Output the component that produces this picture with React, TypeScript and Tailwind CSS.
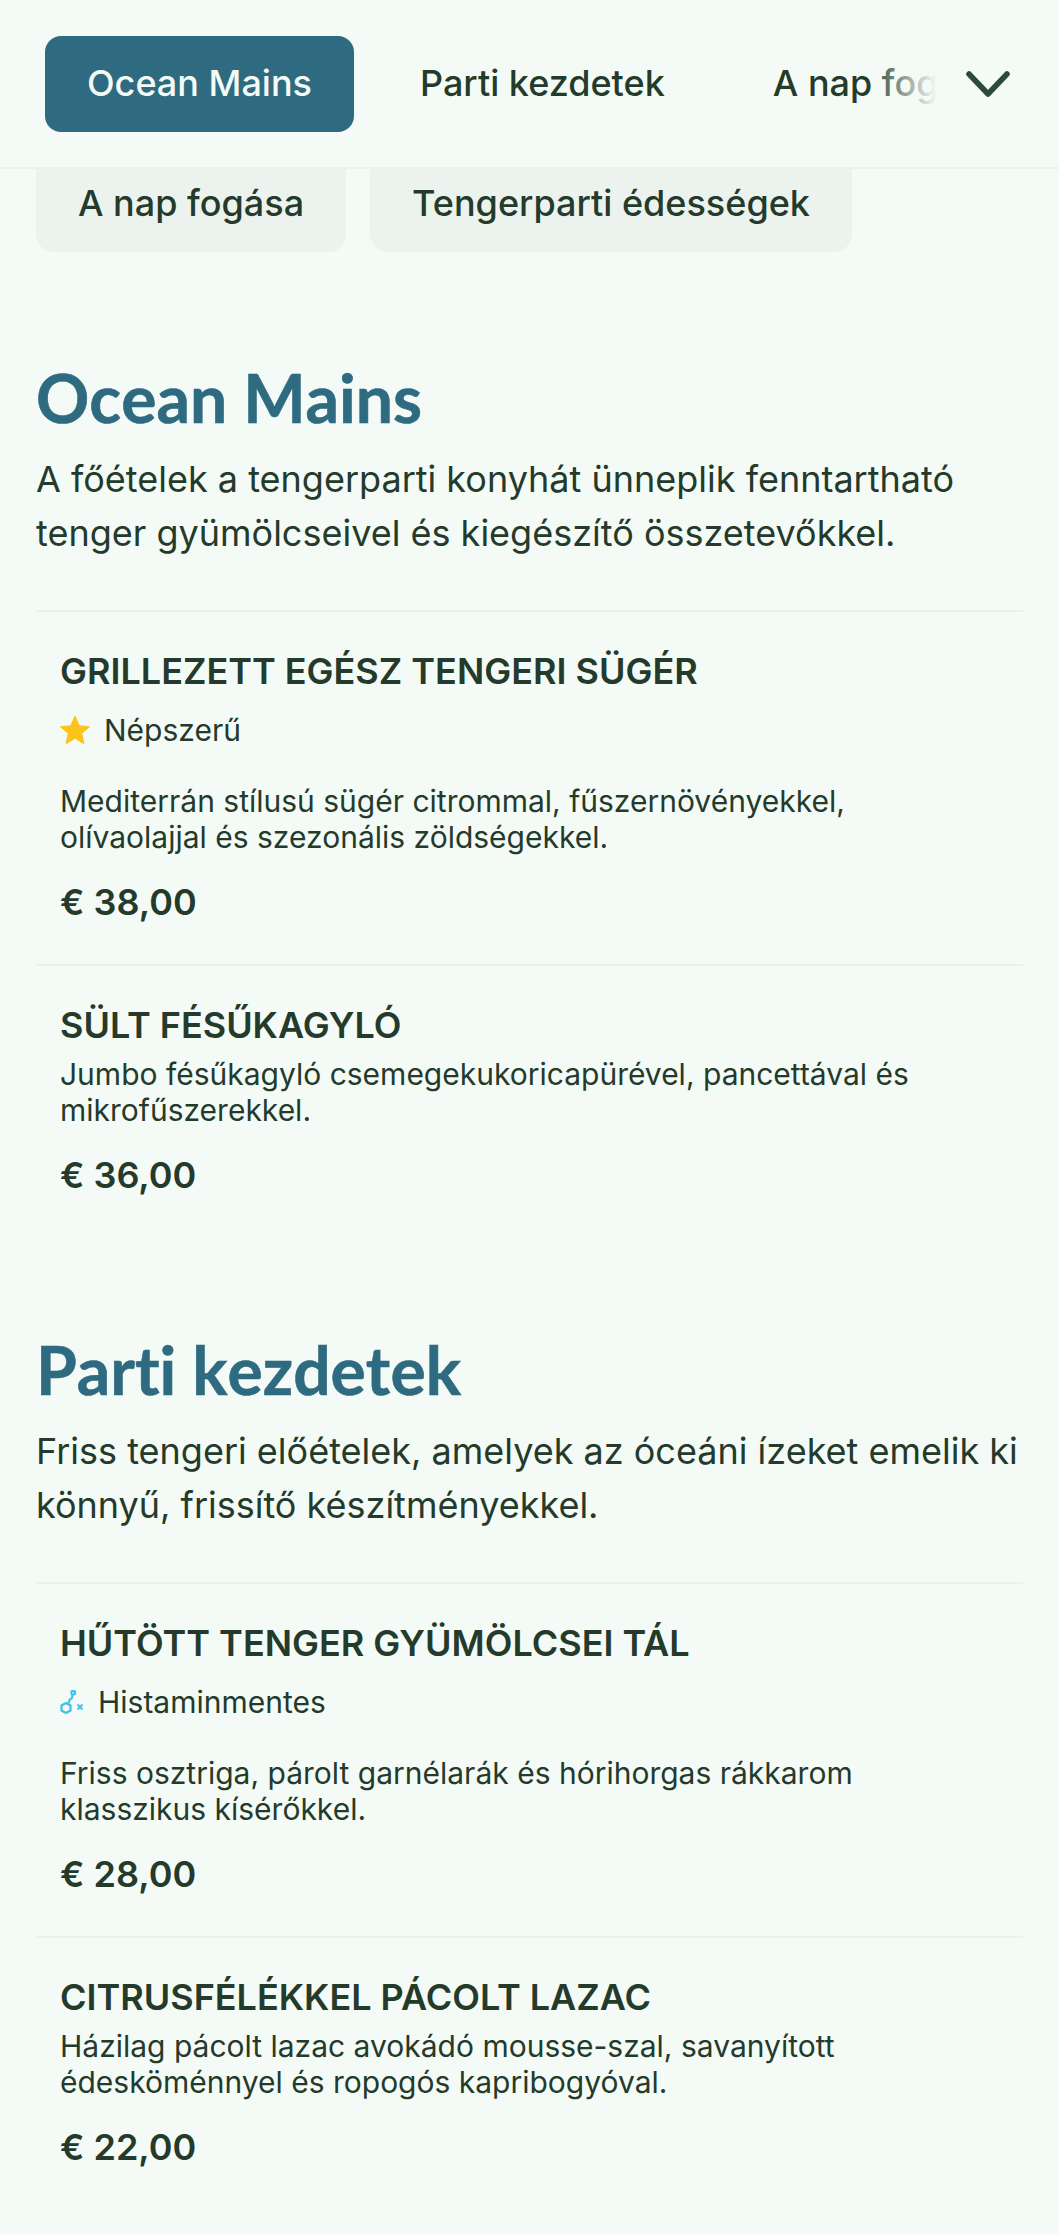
import React from "react";

const inter = "font-['Inter',sans-serif]";

function Star() {
  return (
    <svg viewBox="0 0 30 31" className="w-[30px] h-[31px] shrink-0" aria-hidden="true">
      <path fill="#fcc419" stroke="#fcc419" strokeWidth="1" strokeLinejoin="round" d="M15 1l4.200 9.800 10.300.9-7.800 6.800 2.300 10.200L15 23.300l-9 5.400 2.300-10.200L.5 11.700l10.300-.9z" />
    </svg>
  );
}

function Molecule() {
  return (
    <svg viewBox="0 0 24 24" className="w-[24px] h-[24px] shrink-0" fill="none" stroke="#3fc1ea" strokeWidth="2.200" aria-hidden="true">
      <path d="M6 13l4.500 2.500v5L6 23l-4.500-2.500v-5z" />
      <path d="M8.500 13.500l1-3.500 2.500-2 .5-3" />
      <rect x="11.500" y="1" width="3.500" height="3.500" rx="1" />
      <path strokeWidth="1.800" d="M17.500 14.500l5 5M22.500 14.500l-5 5" />
    </svg>
  );
}

type ItemProps = { title: string; badge?: "star" | "hist"; desc: string; price: string };

function Item({ title, badge, desc, price }: ItemProps) {
  return (
    <div className="border-t-2 border-[#ebf1ec] px-[24px] pt-[35px] pb-[38px] text-[#243a2b]">
      <h3 className="text-[36px] leading-[48px] font-semibold">{title}</h3>
      {badge ? (
        <div className="flex items-center mt-[17px] mb-[35px] h-[36px]">
          {badge === "star" ? <Star /> : <Molecule />}
          <span className="text-[30px] leading-[36px] ml-[14px]">
            {badge === "star" ? "Népszerű" : "Histaminmentes"}
          </span>
        </div>
      ) : (
        <div className="h-[7px]"></div>
      )}
      <p className="text-[30px] leading-[36px]">{desc}</p>
      <div className="text-[36px] leading-[48px] font-semibold mt-[23px]">{price}</div>
    </div>
  );
}

function Section({ title, intro, children }: { title: string; intro: string; children: React.ReactNode }) {
  return (
    <section className="mt-[93px] first:mt-[0px]">
      <h2 className="font-['Lato',sans-serif] font-bold text-[#2f6b80] text-[66px] leading-[80px] [font-variant-ligatures:none] [font-kerning:none] [-webkit-text-stroke:0.6px_#2f6b80]">{title}</h2>
      <p className="text-[36px] leading-[54px] text-[#243a2b] mt-[14px] mb-[50px]">{intro}</p>
      {children}
    </section>
  );
}

export default function App() {
  return (
    <div className={`${inter} bg-[#f4faf6] h-[2235px] w-[1059px] overflow-hidden`}>
      <nav className="relative z-10 h-[169px] bg-[#f4faf6] border-b-2 border-[#ebf1ec] flex items-center overflow-hidden">
        <div className="flex gap-[24px] pl-[45px] whitespace-nowrap text-[36px] font-medium text-[#243a2b]">
          <span className="h-[96px] pb-[2px] flex items-center px-[42px] bg-[#2f6b80] text-[#f4faf6] rounded-[16px]">Ocean Mains</span>
          <span className="h-[96px] pb-[2px] flex items-center px-[42px]">Parti kezdetek</span>
          <span className="h-[96px] pb-[2px] flex items-center px-[42px]">A nap fogása</span>
        </div>
        <div className="absolute right-0 top-0 bottom-0 flex items-center">
          <div className="w-[70px] h-full bg-gradient-to-r from-[#f4faf600] to-[#f4faf6] shrink-0"></div>
          <div className="w-[122px] h-full bg-[#f4faf6] flex items-center pl-[29px]">
            <svg viewBox="0 0 44 28" className="w-[44px] h-[28px]" fill="none" stroke="#2c4a38" strokeWidth="5.500" strokeLinecap="round" strokeLinejoin="round" aria-hidden="true">
              <path d="M3 4l19 20L41 4" />
            </svg>
          </div>
        </div>
      </nav>
      <div className="flex gap-[24px] pl-[36px] text-[36px] font-medium text-[#243a2b]">
        <span className="h-[83px] pb-[16px] flex items-center px-[42px] bg-[#ecf3ef] rounded-b-[18px]">A nap fogása</span>
        <span className="h-[83px] pb-[16px] flex items-center px-[42px] bg-[#ecf3ef] rounded-b-[18px]">Tengerparti édességek</span>
      </div>
      <main className="px-[36px] mt-[106px]">
        <Section title="Ocean Mains" intro="A főételek a tengerparti konyhát ünneplik fenntartható tenger gyümölcseivel és kiegészítő összetevőkkel.">
          <Item title="GRILLEZETT EGÉSZ TENGERI SÜGÉR" badge="star" desc="Mediterrán stílusú sügér citrommal, fűszernövényekkel, olívaolajjal és szezonális zöldségekkel." price="€ 38,00" />
          <Item title="SÜLT FÉSŰKAGYLÓ" desc="Jumbo fésűkagyló csemegekukoricapürével, pancettával és mikrofűszerekkel." price="€ 36,00" />
        </Section>
        <Section title="Parti kezdetek" intro="Friss tengeri előételek, amelyek az óceáni ízeket emelik ki könnyű, frissítő készítményekkel.">
          <Item title="HŰTÖTT TENGER GYÜMÖLCSEI TÁL" badge="hist" desc="Friss osztriga, párolt garnélarák és hórihorgas rákkarom klasszikus kísérőkkel." price="€ 28,00" />
          <Item title="CITRUSFÉLÉKKEL PÁCOLT LAZAC" desc="Házilag pácolt lazac avokádó mousse-szal, savanyított édesköménnyel és ropogós kapribogyóval." price="€ 22,00" />
        </Section>
      </main>
    </div>
  );
}
